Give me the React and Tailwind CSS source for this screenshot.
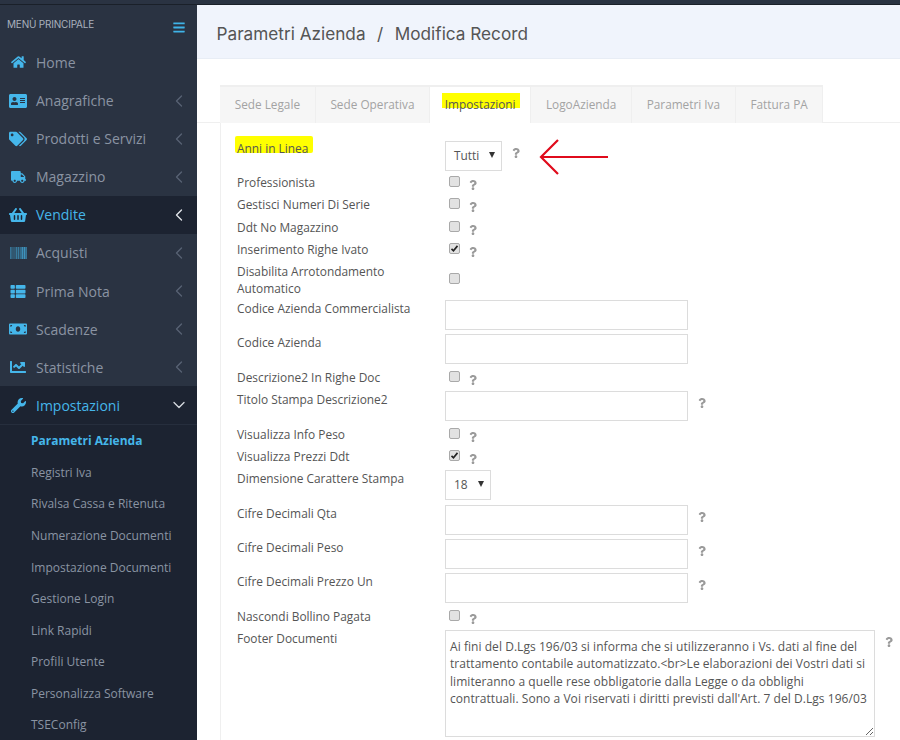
import {
    FaAddressCard,
    FaBars,
    FaBarcode,
    FaChartLine,
    FaHome,
    FaMoneyBill,
    FaQuestion,
    FaShoppingBasket,
    FaTags,
    FaThList,
    FaTruck,
    FaWrench,
} from "react-icons/fa";
import { ChevronDown, ChevronLeft } from "lucide-react";

const menu = [
    { label: "Home", icon: FaHome, size: "h-[14px] w-[15px]", arrow: false },
    { label: "Anagrafiche", icon: FaAddressCard, size: "h-[16px] w-[18px]", arrow: true },
    { label: "Prodotti e Servizi", icon: FaTags, size: "h-[16px] w-[18px]", arrow: true },
    { label: "Magazzino", icon: FaTruck, size: "h-[14px] w-[15px]", arrow: true },
    { label: "Vendite", icon: FaShoppingBasket, size: "h-[16px] w-[18px]", arrow: true, active: true },
    { label: "Acquisti", icon: FaBarcode, size: "h-[16px] w-[17px]", arrow: true },
    { label: "Prima Nota", icon: FaThList, size: "h-[15px] w-[16px]", arrow: true },
    { label: "Scadenze", icon: FaMoneyBill, size: "h-[16px] w-[18px]", arrow: true },
    { label: "Statistiche", icon: FaChartLine, size: "h-[16px] w-[18px]", arrow: true },
    { label: "Impostazioni", icon: FaWrench, size: "h-[15px] w-[15px]", arrow: true, active: true, open: true },
];

const submenu = [
    "Parametri Azienda",
    "Registri Iva",
    "Rivalsa Cassa e Ritenuta",
    "Numerazione Documenti",
    "Impostazione Documenti",
    "Gestione Login",
    "Link Rapidi",
    "Profili Utente",
    "Personalizza Software",
    "TSEConfig",
];

const tabs = ["Sede Legale", "Sede Operativa", "Impostazioni", "LogoAzienda", "Parametri Iva", "Fattura PA"];

function Help({ className = "" }) {
    return <FaQuestion className={`h-[10px] w-[10px] text-[#9a9a9a] ${className}`} />;
}

function Check({ checked }) {
    return (
        <span className="ml-[4px] flex h-[11px] w-[11px] items-center justify-center rounded-[2px] border border-[#a9a9a9] bg-[#e2e2e2]">
            {checked && (
                <svg viewBox="0 0 12 12" className="h-[9px] w-[9px]">
                    <path d="M2 6.5 L4.6 9 L10 2.5" fill="none" stroke="#222" strokeWidth="2.2" />
                </svg>
            )}
        </span>
    );
}

function Row({ label, height, children }) {
    return (
        <div className="flex" style={{ height }}>
            <label className="w-[208px] pr-[30px] leading-[17px] text-[#555]">{label}</label>
            <div className="flex items-start">{children}</div>
        </div>
    );
}

function CheckRow({ label, checked, height = 22 }) {
    return (
        <Row label={label} height={height}>
            <span className="mt-[2px]">
                <Check checked={checked} />
            </span>
            <Help className="ml-[8px] mt-[5.5px]" />
        </Row>
    );
}

function InputRow({ label, help = true, height = 34 }) {
    return (
        <Row label={label} height={height}>
            <span className="block h-[30px] w-[243px] border border-[#dcdcdc] bg-white" />
            {help && <Help className="ml-[9px] mt-[7px]" />}
        </Row>
    );
}

function Sidebar() {
    return (
        <aside className="h-[735px] w-[197px] shrink-0 overflow-hidden bg-[#2a3342] font-['Open_Sans',sans-serif]">
            <div className="flex h-[38.4px] items-start justify-between pl-[7px] pr-[11px] pt-[13px]">
                <span className="font-['Inter',sans-serif] text-[10px] leading-[12px] tracking-[-0.2px] text-[#a9b1bd]">MENÙ PRINCIPALE</span>
                <FaBars className="mt-[3px] h-[13px] w-[14px] text-[#3fb4e8]" />
            </div>
            <nav>
                {menu.map((item) => {
                    const Icon = item.icon;
                    return (
                        <div
                            key={item.label}
                            className={`flex h-[38.1px] items-center text-[14px] ${item.active ? "bg-[#1c2331] text-[#45b6ea]" : "text-[#8a94a3]"}`}
                        >
                            <span className="flex w-[36px] justify-center text-[#45b6ea]">
                                <Icon className={item.size} />
                            </span>
                            <span className="flex-1">{item.label}</span>
                            {item.arrow &&
                                (item.open ? (
                                    <ChevronDown size={20} strokeWidth={1.6} className="mr-[8px] text-[#d5d9df]" />
                                ) : (
                                    <ChevronLeft size={20} strokeWidth={1.6} className={`mr-[8px] ${item.active ? "text-[#e2e5ea]" : "text-[#586273]"}`} />
                                ))}
                        </div>
                    );
                })}
            </nav>
            <ul className="border-t border-[#262e3d] bg-[#1c2331]">
                {submenu.map((name, i) => (
                    <li
                        key={name}
                        className={`flex h-[31.6px] items-center pl-[31px] text-[12px] ${i === 0 ? "font-bold text-[#45b6ea]" : "text-[#8a94a3]"}`}
                    >
                        {name}
                    </li>
                ))}
            </ul>
        </aside>
    );
}

function Tabs() {
    return (
        <div className="flex h-[38px] border-b border-[#efefef] pl-[23px]">
            {tabs.map((tab) => {
                const active = tab === "Impostazioni";
                return (
                    <div
                        key={tab}
                        className={`relative flex h-[38px] items-center border-r border-t-[2px] border-[#efefef] px-[14.7px] text-[11.8px] ${active ? "bg-white text-[#555]" : "bg-[#f6f6f6] text-[#a3a3a3]"}`}
                    >
                        {active && <span className="absolute left-[12px] top-[6px] h-[15px] w-[78px] bg-[#ffff00]" />}
                        <span className="relative">{tab}</span>
                    </div>
                );
            })}
        </div>
    );
}

function Select({ value, width }) {
    return (
        <span className={`flex h-[30px] items-center justify-between border border-[#dcdcdc] bg-white pl-[8px] pr-[6px] text-[#555] ${width}`}>
            {value}
            <svg viewBox="0 0 6 6" className="mb-[3px] h-[6px] w-[6px]">
                <polygon points="0,0 6,0 3,6" fill="#333" />
            </svg>
        </span>
    );
}

export default function App() {
    return (
        <div className="h-[740px] w-[900px] overflow-hidden bg-white font-['Open_Sans',sans-serif] text-[11.9px]">
            <div className="h-[5px] border-b-[1px] border-[#1a2029] bg-[#2a3342]" />
            <div className="flex">
                <Sidebar />
                <main className="flex-1">
                    <div className="flex h-[54px] items-center border-b border-[#e8edf5] bg-[#f0f4fc] pl-[19.5px] pt-[5px] font-['Inter',sans-serif] text-[17.2px] text-[#555]">
                        Parametri Azienda
                        <span className="mx-[11.5px]">/</span>
                        Modifica Record
                    </div>
                    <div className="pt-[26px]">
                        <Tabs />
                        <div className="relative ml-[23px] border-l border-[#efefef] pl-[16px] pt-[17px]">
                            <span className="absolute left-[14px] top-[13px] h-[17px] w-[78px] rounded-[2px] bg-[#ffff00]" />
                            <div className="relative">
                                <Row label="Anni in Linea" height={34}>
                                    <span className="mt-[1px]">
                                        <Select value="Tutti" width="w-[57px]" />
                                    </span>
                                    <Help className="ml-[9px] mt-[7.5px]" />
                                    <svg viewBox="0 0 70 36" className="-mt-[1.5px] ml-[18px] h-[36px] w-[70px]">
                                        <path d="M2 18 H69 M19 1 L2 18 L19 35" fill="none" stroke="#e00b1c" strokeWidth="2.2" />
                                    </svg>
                                </Row>
                            </div>
                            <CheckRow label="Professionista" />
                            <CheckRow label="Gestisci Numeri Di Serie" height={23} />
                            <CheckRow label="Ddt No Magazzino" />
                            <CheckRow label="Inserimento Righe Ivato" checked />
                            <Row label="Disabilita Arrotondamento Automatico" height={37}>
                                <span className="mt-[10px]">
                                    <Check />
                                </span>
                            </Row>
                            <InputRow label="Codice Azienda Commercialista" help={false} />
                            <InputRow label="Codice Azienda" help={false} height={35} />
                            <CheckRow label="Descrizione2 In Righe Doc" />
                            <InputRow label="Titolo Stampa Descrizione2" height={35} />
                            <CheckRow label="Visualizza Info Peso" />
                            <CheckRow label="Visualizza Prezzi Ddt" checked />
                            <Row label="Dimensione Carattere Stampa" height={35}>
                                <Select value="18" width="w-[46px]" />
                            </Row>
                            <InputRow label="Cifre Decimali Qta" />
                            <InputRow label="Cifre Decimali Peso" />
                            <InputRow label="Cifre Decimali Prezzo Un" height={35} />
                            <CheckRow label="Nascondi Bollino Pagata" />
                            <Row label="Footer Documenti" height={110}>
                                <textarea
                                    readOnly
                                    className="h-[107px] w-[430px] border border-[#dcdcdc] px-[4px] py-[7px] text-[12px] leading-[17.4px] tracking-[0.05px] text-[#555]"
                                    value={"Ai fini del D.Lgs 196/03 si informa che si utilizzeranno i Vs. dati al fine del trattamento contabile automatizzato.<br>Le elaborazioni dei Vostri dati si limiteranno a quelle rese obbligatorie dalla Legge o da obblighi contrattuali. Sono a Voi riservati i diritti previsti dall'Art. 7 del D.Lgs 196/03"}
                                />
                                <Help className="ml-[9px] mt-[7px]" />
                            </Row>
                        </div>
                    </div>
                </main>
            </div>
        </div>
    );
}
